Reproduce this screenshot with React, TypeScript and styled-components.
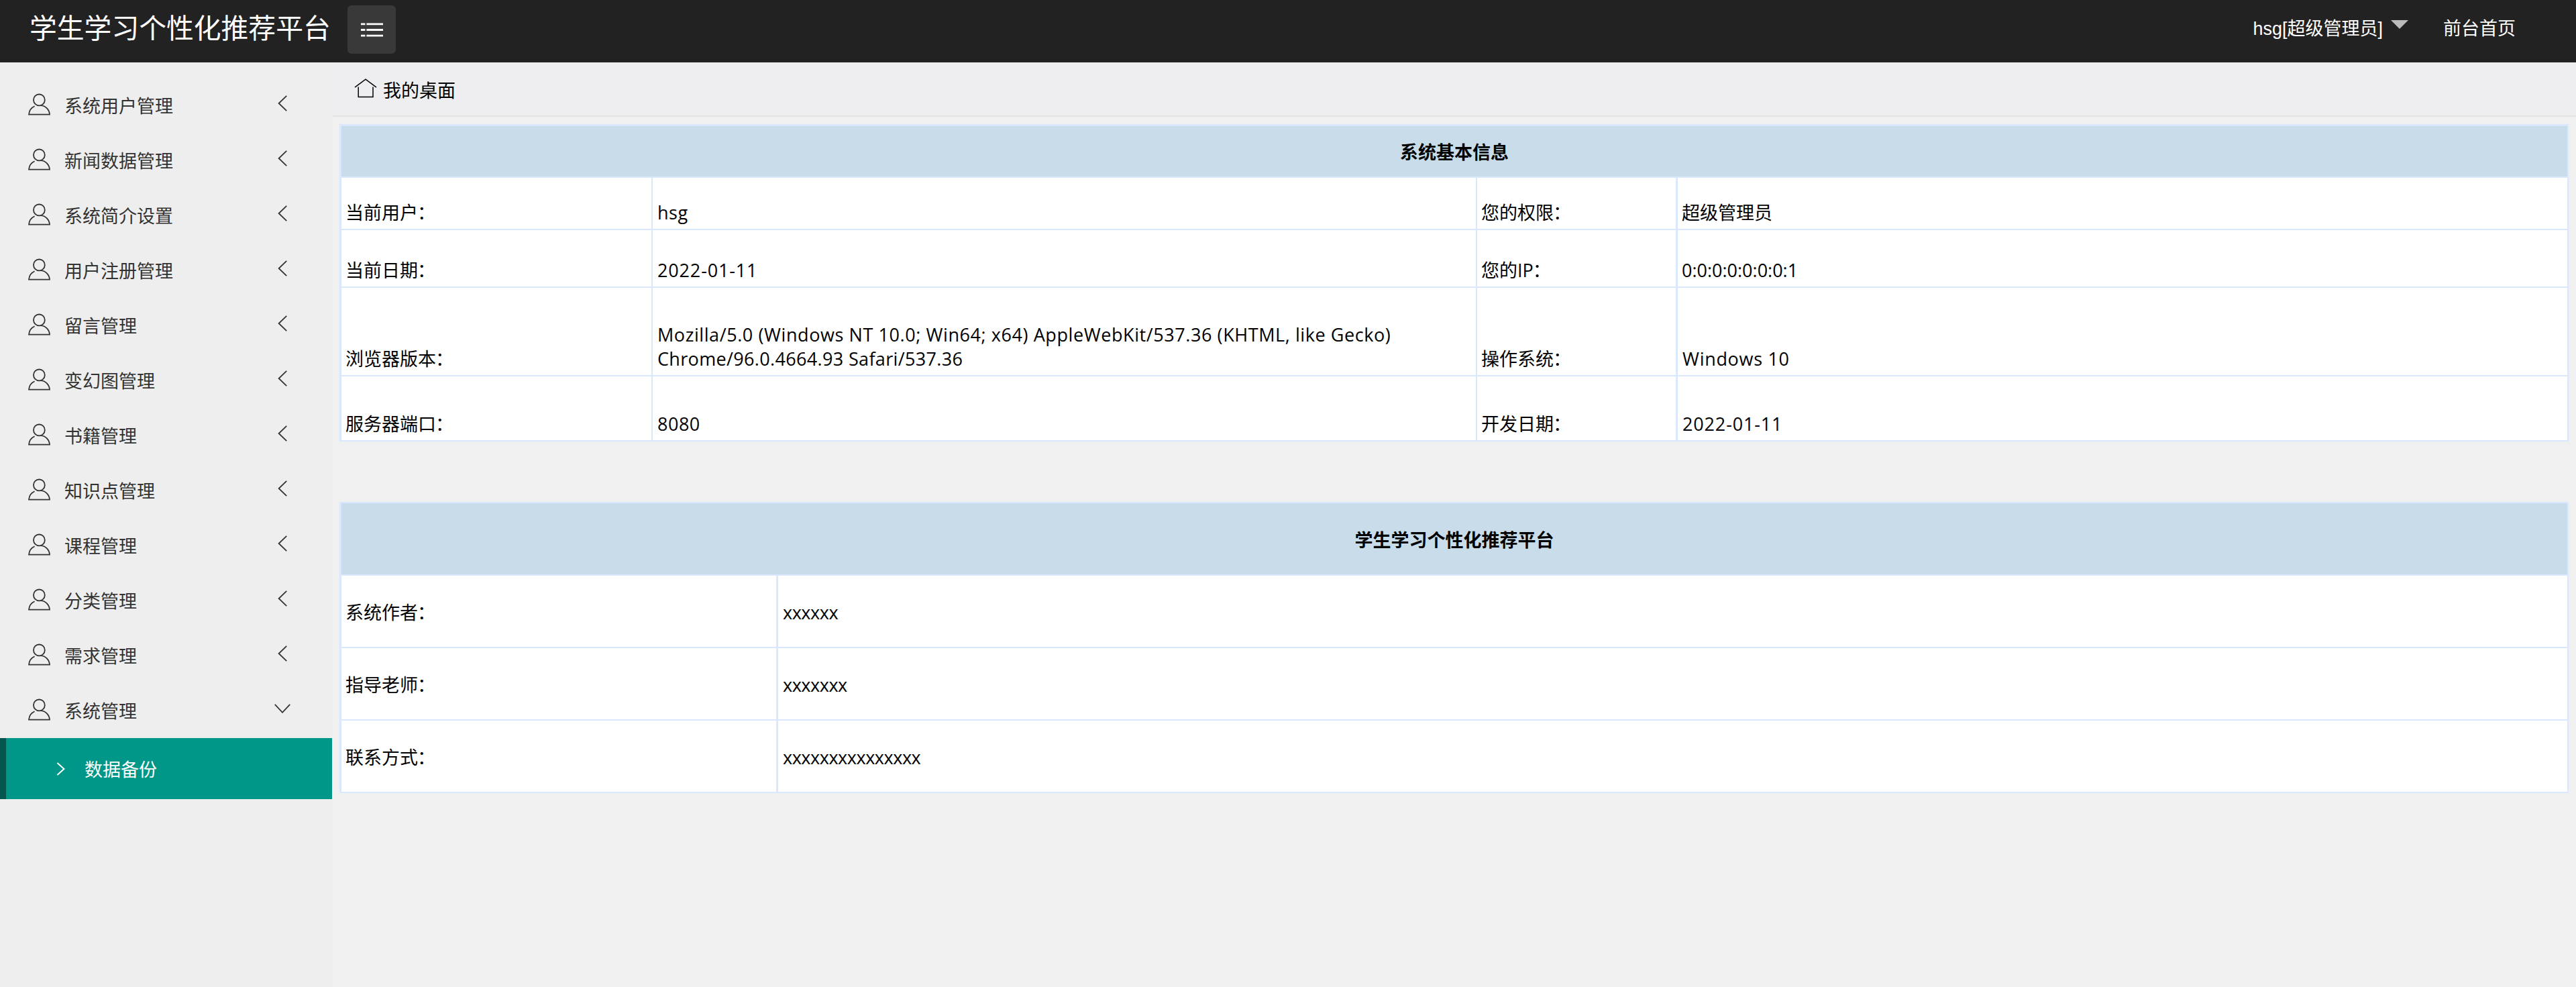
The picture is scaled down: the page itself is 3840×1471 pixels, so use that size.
import React from "react";
import styled, { createGlobalStyle } from "styled-components";

const line = "#d9e8fd";
const cjk = '"Noto Sans CJK SC"';

const GlobalStyle = createGlobalStyle`
  * { box-sizing: border-box; }
  body {
    margin: 0;
    background: #f0f0f0;
    color: #000;
    font: 27px/36px "Open Sans", ${cjk}, sans-serif;
  }
`;

const Page = styled.div`
  display: flex;
  flex-direction: column;
  width: 3840px;
  height: 1471px;
  overflow: hidden;
`;

const Header = styled.header`
  display: flex;
  align-items: flex-start;
  flex: none;
  height: 93px;
  padding-left: 44px;
  background: #222;
  color: #fff;
`;

const Title = styled.h1`
  width: 474px;
  margin: 0;
  font: 400 40.8px/80px ${cjk}, sans-serif;
  white-space: nowrap;
`;

const MenuButton = styled.button`
  display: flex;
  align-items: center;
  justify-content: center;
  width: 72px;
  height: 72px;
  margin: 8px 0 0;
  padding: 0;
  border: 0;
  border-radius: 6px;
  background: #393939;
`;

const UserNav = styled.nav`
  display: flex;
  align-items: flex-start;
  margin-left: auto;
  padding-right: 90px;
  font-family: "Liberation Sans", ${cjk}, sans-serif;
  line-height: 86px;
  white-space: nowrap;
`;

const UserName = styled.span`
  display: flex;
  align-items: flex-start;
  margin-right: 52px;
`;

const Caret = styled.i`
  margin: 30px 0 0 12px;
  border: 13.5px solid transparent;
  border-top-color: #bbb;
  border-bottom-width: 0;
`;

const Body = styled.div`
  display: flex;
  flex: 1;
  min-height: 0;
`;

const Sidebar = styled.aside`
  flex: none;
  width: 495px;
  padding-top: 23px;
  background: #eee;
  color: #333;
  font-family: ${cjk}, sans-serif;
`;

const MenuItem = styled.div`
  display: flex;
  align-items: center;
  height: 82px;
  padding: 0 61px 3px 42px;
`;

const MenuLabel = styled.span`
  flex: 1;
  margin-left: 21px;
  padding-top: 2px;
  line-height: 36px;
`;

const Arrow = styled.span`
  display: flex;
  justify-content: center;
  width: 26px;
  margin-top: -4px;
`;

const SubItem = styled.div`
  display: flex;
  align-items: center;
  height: 91px;
  padding-left: 75px;
  border-left: 9px solid #05564f;
  background: #009688;
  color: #fff;
`;

const SubLabel = styled.span`
  margin-left: 29px;
`;

const Main = styled.main`
  flex: 1;
  min-width: 0;
`;

const TabBar = styled.div`
  display: flex;
  align-items: flex-start;
  height: 81px;
  padding: 24px 0 0 33px;
  border-bottom: 2px solid #e4e4e4;
  background: #eeeef0;
  font-family: ${cjk}, sans-serif;
`;

const TabLabel = styled.span`
  margin-left: 9px;
  line-height: 34px;
`;

const Panels = styled.div`
  display: flex;
  flex-direction: column;
  gap: 90px;
  padding: 11px 11px 0;
`;

const Panel = styled.section<{ $top: number }>`
  border: 0 solid ${line};
  border-width: ${(p) => p.$top}px 2px 0 3px;
  background: #fff;
`;

const PanelHead = styled.h2<{ $height: number; $drop: number }>`
  display: flex;
  align-items: center;
  justify-content: center;
  height: ${(p) => p.$height}px;
  margin: 0;
  padding-top: ${(p) => p.$drop}px;
  border-bottom: 2px solid ${line};
  background: #c9dce9;
  font: 700 27px/36px ${cjk}, sans-serif;
`;

const Row = styled.div<{ $columns: string; $height: number }>`
  display: grid;
  grid-template-columns: ${(p) => p.$columns};
  height: ${(p) => p.$height}px;
  border-bottom: 2px solid ${line};
`;

const Cell = styled.div<{ $middle?: boolean; $rule?: number }>`
  display: flex;
  flex-direction: column;
  justify-content: ${(p) => (p.$middle ? "center" : "flex-end")};
  padding: ${(p) => (p.$middle ? "3px 6px 0" : "0 6px 6px")};
  border-right: ${(p) => p.$rule ?? 0}px solid ${line};
`;

const Value = styled.span<{ $track?: number }>`
  padding-left: ${(p) => (p.$track ? 1 : 0)}px;
  letter-spacing: ${(p) => p.$track ?? 0}px;
`;

const Colon = styled.span`
  margin-left: -1px;
`;

const Label = ({ text }: { text: string }) => (
  <span>
    {text}
    <Colon>：</Colon>
  </span>
);

const UserIcon = () => (
  <svg width="33" height="33" viewBox="0 0 33 33" fill="none" stroke="#333" strokeWidth="1.8">
    <circle cx="16.4" cy="9.9" r="8.4" />
    <path d="M9.6 19.2C4.6 21.5 1.4 26 1 31.7H32C31.6 24.5 26 18.6 18.6 18.2" />
  </svg>
);

const LeftIcon = () => (
  <svg width="14" height="24" viewBox="0 0 14 24" fill="none" stroke="#333" strokeWidth="1.8">
    <path d="M13.2 .8 1.6 12 13.2 23.2" />
  </svg>
);

const DownIcon = () => (
  <svg width="24" height="14" viewBox="0 0 24 14" fill="none" stroke="#333" strokeWidth="1.8">
    <path d="M.8 .8 12 12.8 23.2 .8" />
  </svg>
);

const RightIcon = () => (
  <svg width="13" height="20" viewBox="0 0 13 20" fill="none" stroke="#fff" strokeWidth="2">
    <path d="M1.4 1 11.4 10 1.4 19" />
  </svg>
);

const ListIcon = () => (
  <svg width="33" height="21" viewBox="0 0 33 21" fill="none" stroke="#fff" strokeWidth="2.8">
    <path d="M0 1.9H6.4M8.4 1.9H33M0 10.5H6.4M8.4 10.5H33M0 19.1H6.4M8.4 19.1H33" />
  </svg>
);

const HomeIcon = () => (
  <svg width="34" height="30" viewBox="0 0 34 30" fill="none" stroke="#000" strokeWidth="1.5">
    <path d="M1 13.2 17 1.2 33 13.2M6.2 12.6V27.6H28V12.6" />
  </svg>
);

const menu = [
  "系统用户管理",
  "新闻数据管理",
  "系统简介设置",
  "用户注册管理",
  "留言管理",
  "变幻图管理",
  "书籍管理",
  "知识点管理",
  "课程管理",
  "分类管理",
  "需求管理",
  "系统管理",
];

type Line = { text: string; track?: number };
type Field = { label: string; lines: Line[] };
type Info = { height: number; fields: [Field, Field] };

const info: Info[] = [
  {
    height: 78,
    fields: [
      { label: "当前用户", lines: [{ text: "hsg", track: 0.5 }] },
      { label: "您的权限", lines: [{ text: "超级管理员" }] },
    ],
  },
  {
    height: 86,
    fields: [
      { label: "当前日期", lines: [{ text: "2022-01-11", track: 0.85 }] },
      { label: "您的IP", lines: [{ text: "0:0:0:0:0:0:0:1" }] },
    ],
  },
  {
    height: 132,
    fields: [
      {
        label: "浏览器版本",
        lines: [
          {
            text: "Mozilla/5.0 (Windows NT 10.0; Win64; x64) AppleWebKit/537.36 (KHTML, like Gecko)",
            track: 0.58,
          },
          { text: "Chrome/96.0.4664.93 Safari/537.36", track: 0.34 },
        ],
      },
      { label: "操作系统", lines: [{ text: "Windows 10", track: 0.7 }] },
    ],
  },
  {
    height: 97,
    fields: [
      { label: "服务器端口", lines: [{ text: "8080", track: 0.5 }] },
      { label: "开发日期", lines: [{ text: "2022-01-11", track: 0.85 }] },
    ],
  },
];

const authors = [
  ["系统作者", "xxxxxx"],
  ["指导老师", "xxxxxxx"],
  ["联系方式", "xxxxxxxxxxxxxxx"],
];

export default function App() {
  return (
    <Page lang="zh-CN">
      <GlobalStyle />
      <Header>
        <Title>学生学习个性化推荐平台</Title>
        <MenuButton aria-label="menu">
          <ListIcon />
        </MenuButton>
        <UserNav>
          <UserName>
            hsg[超级管理员]
            <Caret />
          </UserName>
          <span>前台首页</span>
        </UserNav>
      </Header>
      <Body>
        <Sidebar>
          {menu.map((label, i) => (
            <MenuItem key={label}>
              <UserIcon />
              <MenuLabel>{label}</MenuLabel>
              <Arrow>{i === menu.length - 1 ? <DownIcon /> : <LeftIcon />}</Arrow>
            </MenuItem>
          ))}
          <SubItem>
            <RightIcon />
            <SubLabel>数据备份</SubLabel>
          </SubItem>
        </Sidebar>
        <Main>
          <TabBar>
            <HomeIcon />
            <TabLabel>我的桌面</TabLabel>
          </TabBar>
          <Panels>
            <Panel $top={3}>
              <PanelHead $height={77} $drop={1}>
                系统基本信息
              </PanelHead>
              {info.map(({ height, fields }) => (
                <Row key={fields[0].label} $height={height} $columns="464px 1229px 299px 1fr">
                  {fields.map(({ label, lines }, i) => (
                    <React.Fragment key={label}>
                      <Cell $rule={i ? 3 : 2}>
                        <Label text={label} />
                      </Cell>
                      <Cell $rule={i ? 0 : 2}>
                        {lines.map(({ text, track }) => (
                          <Value key={text} $track={track}>
                            {text}
                          </Value>
                        ))}
                      </Cell>
                    </React.Fragment>
                  ))}
                </Row>
              ))}
            </Panel>
            <Panel $top={2}>
              <PanelHead $height={108} $drop={2}>
                学生学习个性化推荐平台
              </PanelHead>
              {authors.map(([label, value]) => (
                <Row key={label} $height={108} $columns="651px 1fr">
                  <Cell $middle $rule={3}>
                    <Label text={label} />
                  </Cell>
                  <Cell $middle>
                    <Value $track={-0.45}>{value}</Value>
                  </Cell>
                </Row>
              ))}
            </Panel>
          </Panels>
        </Main>
      </Body>
    </Page>
  );
}
